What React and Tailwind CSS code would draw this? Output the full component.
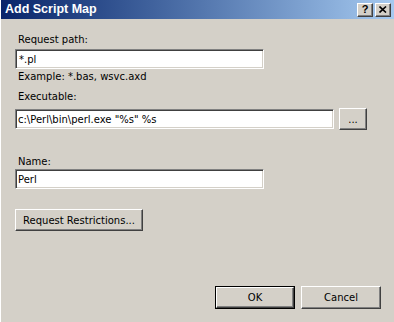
export default function App() {
  const raised =
    'border-t border-l border-t-white border-l-white border-b border-r border-b-[#404040] border-r-[#404040] shadow-[inset_-1px_-1px_#808080,inset_1px_1px_#D4D0C8] bg-[#D4D0C8]';
  const sunken =
    'border-t border-l border-t-[#808080] border-l-[#808080] border-b border-r border-b-white border-r-white shadow-[inset_1px_1px_#404040,inset_-1px_-1px_#D4D0C8] bg-white';

  return (
    <div className="w-[394px] h-[322px] bg-[#D4D0C8] border-l border-white flex flex-col font-['DejaVu_Sans',Verdana,sans-serif] text-[10px] text-black overflow-hidden">
      {/* Title bar */}
      <div className="h-[19px] flex items-center bg-gradient-to-r from-[#0A246A] to-[#A6CAF0] pl-[4px] pr-[3px]">
        <span className="flex-1 text-white font-bold text-[12.5px] leading-none font-['Liberation_Sans',Arial,sans-serif]">Add Script Map</span>
        <div className="flex gap-[2px]">
          <div className={`w-[16px] h-[14px] flex items-center justify-center ${raised}`}>
            <span className="font-bold text-[11px] leading-none font-['Liberation_Sans',Arial,sans-serif]">?</span>
          </div>
          <div className={`w-[16px] h-[14px] flex items-center justify-center ${raised}`}>
            <svg width="8" height="7" viewBox="0 0 8 7">
              <path d="M0.5 0.5 L7 6.5 M7 0.5 L0.5 6.5" stroke="black" strokeWidth="1.6" />
            </svg>
          </div>
        </div>
      </div>

      {/* Body */}
      <div className="flex flex-col flex-1 pl-[14px]">
        <div className="mt-[14px] leading-[13px] pl-[3px]">Request path:</div>
        <div className={`mt-[3px] w-[249px] h-[20px] flex items-center pl-[3px] ${sunken}`}>*.pl</div>
        <div className="mt-[1px] leading-[13px] pl-[3px]">Example: *.bas, wsvc.axd</div>

        <div className="mt-[7px] leading-[13px] pl-[3px]">Executable:</div>
        <div className="mt-[5px] h-[22px] flex items-center">
          <div className={`w-[319px] h-[20px] flex items-center pl-[2px] ${sunken}`}>
            c:\Perl\bin\perl.exe "%s" %s
          </div>
          <div className={`ml-[5px] w-[28px] h-[22px] flex items-center justify-center ${raised}`}>
            <span className="leading-none pt-[2px]">...</span>
          </div>
        </div>

        <div className="mt-[25px] leading-[13px] pl-[3px]">Name:</div>
        <div className={`mt-[1px] w-[249px] h-[20px] flex items-center pl-[2px] ${sunken}`}>Perl</div>

        <div className={`mt-[20px] w-[128px] h-[22px] flex items-center justify-center ${raised}`}>
          Request Restrictions...
        </div>

        <div className="mt-[55px] flex justify-end gap-[6px] pr-[13px]">
          <div className="w-[80px] h-[23px] border border-black flex">
            <div className={`flex-1 flex items-center justify-center ${raised}`}>OK</div>
          </div>
          <div className={`w-[80px] h-[23px] flex items-center justify-center ${raised}`}>Cancel</div>
        </div>
      </div>
    </div>
  );
}
